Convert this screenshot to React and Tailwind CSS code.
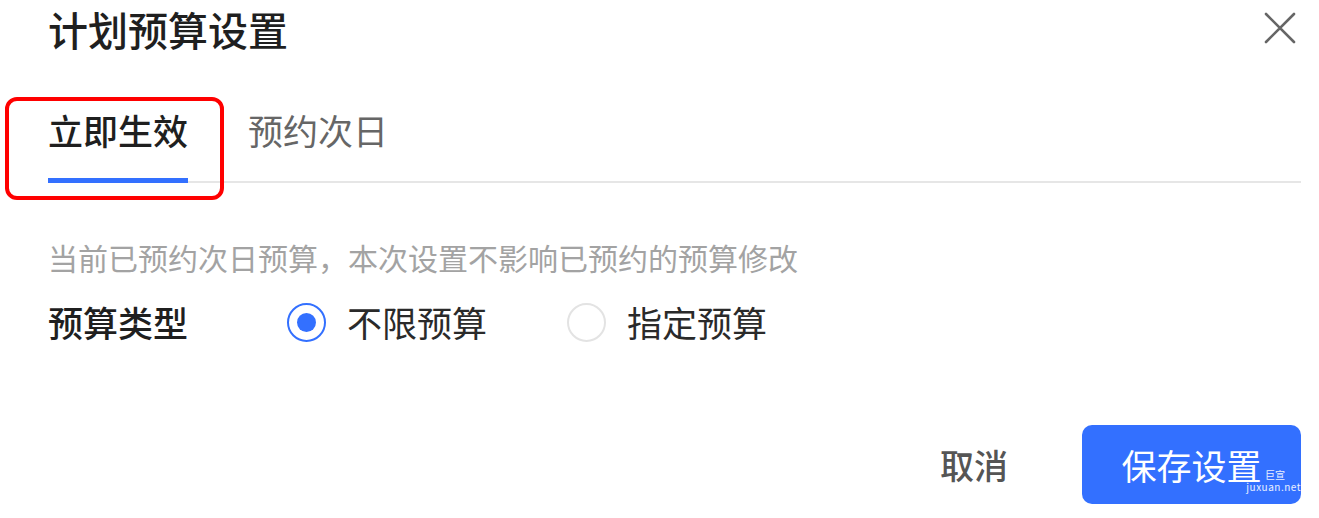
import { useState } from 'react'

const font = { fontFamily: '"Noto Sans CJK SC", "Noto Sans", sans-serif' }

function Radio({ checked, label, onClick }) {
  return (
    <button onClick={onClick} className="flex items-center gap-[21px]">
      <span
        className={
          'flex h-[39px] w-[39px] items-center justify-center rounded-full border-[2px] ' +
          (checked ? 'border-[#3370ff]' : 'border-[#e3e3e3]')
        }
      >
        {checked && <span className="h-[19px] w-[19px] rounded-full bg-[#3370ff]" />}
      </span>
      <span className="text-[35px] leading-[40px] text-[#2a2a2a]">{label}</span>
    </button>
  )
}

export default function App() {
  const [tab, setTab] = useState('now')
  const [type, setType] = useState('unlimited')

  return (
    <div style={font} className="relative h-[518px] w-[1319px] overflow-hidden bg-white pl-[48px] pr-[18px]">
      {/* header */}
      <div className="flex items-center justify-between pt-[9px]">
        <h1 className="text-[40px] font-medium leading-[40px] text-[#1f1f1f]">计划预算设置</h1>
        <button className="mr-[5px] mt-[-2px] flex h-[32px] w-[32px] items-center justify-center text-[#666]">
          <svg width="32" height="32" viewBox="0 0 32 32" fill="none" stroke="currentColor" strokeWidth="2.6" strokeLinecap="round">
            <path d="M2 2L30 30M30 2L2 30" />
          </svg>
        </button>
      </div>

      {/* tabs */}
      <div className="mt-[63px] flex gap-[60px] border-b-2 border-[#e6e6e6]">
        <button
          onClick={() => setTab('now')}
          className={
            'mb-[-2px] border-b-[5px] pb-[30px] text-[35px] leading-[36px] ' +
            (tab === 'now' ? 'border-[#3370ff] font-medium text-[#1f1f1f]' : 'border-transparent text-[#666]')
          }
        >
          立即生效
        </button>
        <button
          onClick={() => setTab('next')}
          className={
            'mb-[-2px] border-b-[5px] pb-[30px] text-[35px] leading-[36px] ' +
            (tab === 'next' ? 'border-[#3370ff] font-medium text-[#1f1f1f]' : 'border-transparent text-[#666]')
          }
        >
          预约次日
        </button>
      </div>

      <p className="mt-[59px] text-[30px] leading-[30px] text-[#a3a3a3]">
        当前已预约次日预算，本次设置不影响已预约的预算修改
      </p>

      {/* budget type */}
      <div className="mt-[30px] flex items-center">
        <span className="w-[239px] text-[35px] font-medium leading-[40px] text-[#1f1f1f]">预算类型</span>
        <div className="flex items-center gap-[80px]">
          <Radio checked={type === 'unlimited'} label="不限预算" onClick={() => setType('unlimited')} />
          <Radio checked={type === 'fixed'} label="指定预算" onClick={() => setType('fixed')} />
        </div>
      </div>

      {/* footer */}
      <div className="mt-[83px] flex items-center justify-end gap-[74px]">
        <button className="text-[34px] font-medium leading-[40px] text-[#555]">取消</button>
        <button className="relative flex h-[79px] w-[219px] items-center justify-center rounded-[10px] bg-[#3370ff] text-white">
          <span className="text-[35px] leading-[36px]">保存设置</span>
          <span className="absolute right-[16px] top-[45px] text-[10px] leading-[9px] text-white/90">巨宣</span>
          <span className="absolute right-0 top-[57px] text-[10px] leading-[9px] tracking-[0.5px] text-white/90">
            juxuan.net
          </span>
        </button>
      </div>

      {/* highlight annotation */}
      <div className="pointer-events-none absolute left-[5px] top-[97px] h-[103px] w-[219px] rounded-[12px] border-[4px] border-[#ff0000]" />
    </div>
  )
}
